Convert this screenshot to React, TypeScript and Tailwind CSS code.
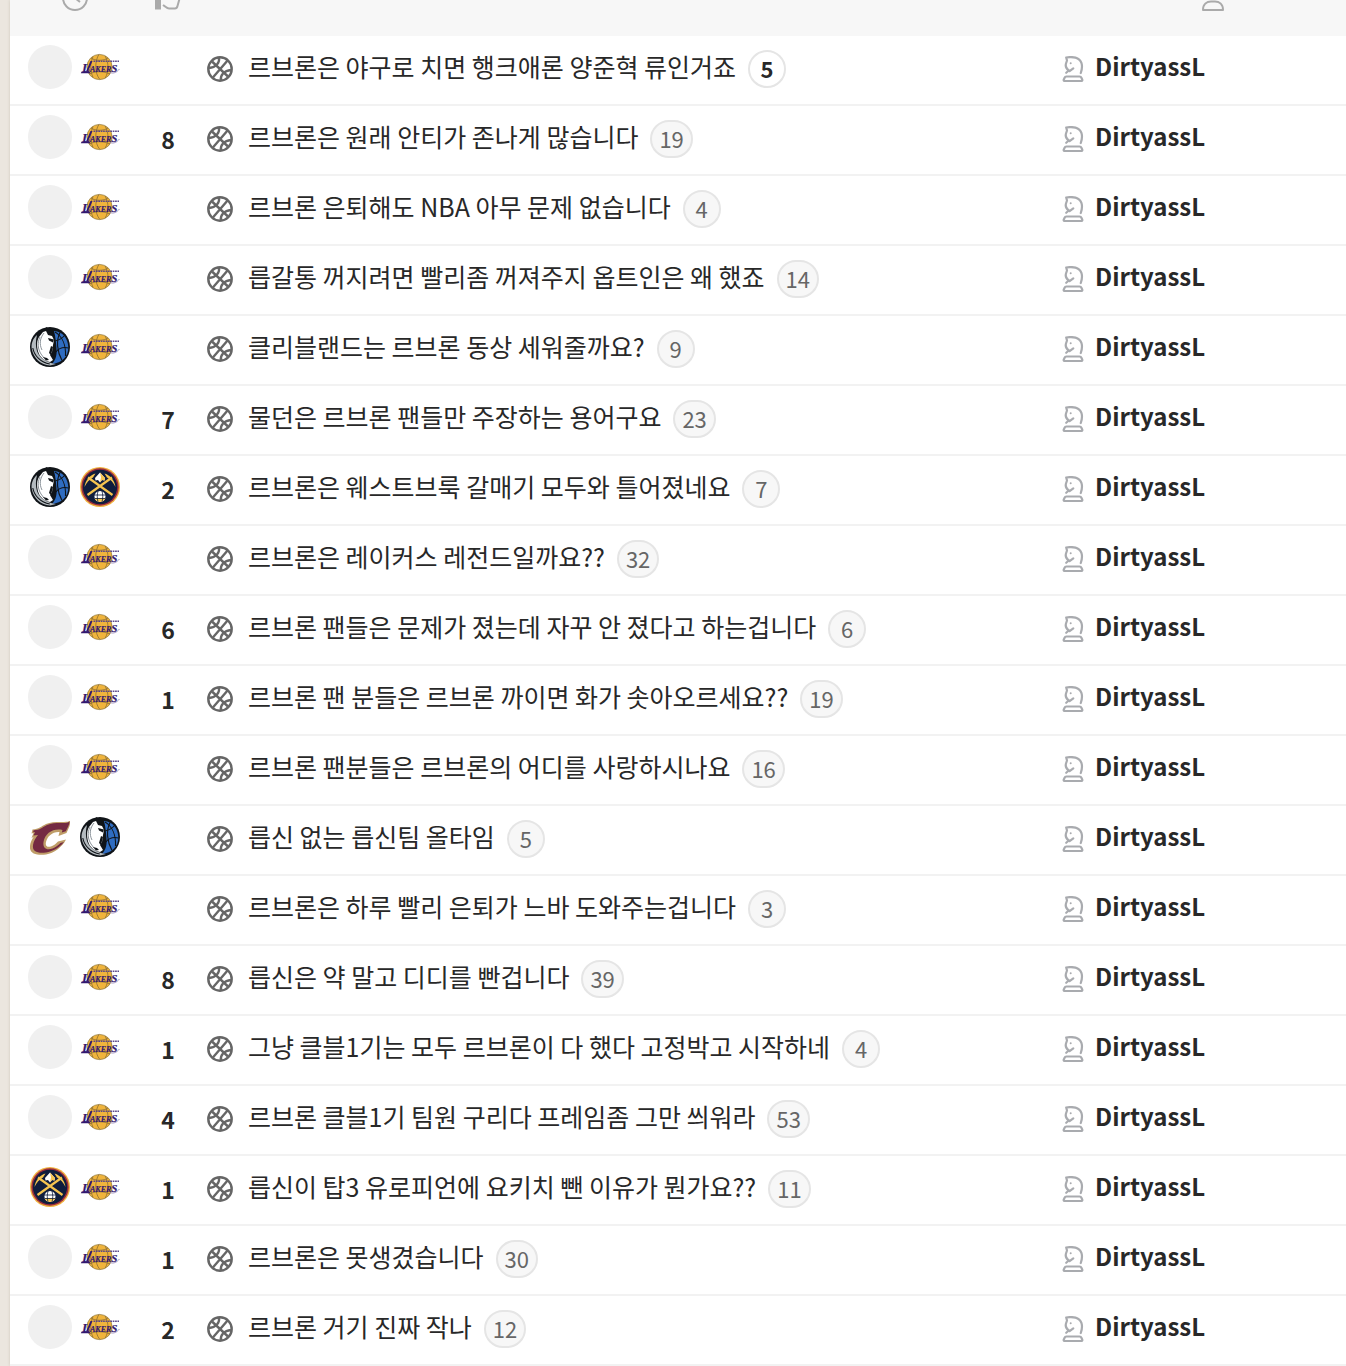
import type { ReactNode } from 'react';

type Team = 'none' | 'lakers' | 'mavs' | 'nuggets' | 'cavs';

interface Post {
  teams: [Team, Team];
  votes?: number;
  title: string;
  comments: number;
  hot?: boolean;
}

const AUTHOR = 'DirtyassL';

const posts: Post[] = [
  { teams: ['none', 'lakers'], title: '르브론은 야구로 치면 행크애론 양준혁 류인거죠', comments: 5, hot: true },
  { teams: ['none', 'lakers'], votes: 8, title: '르브론은 원래 안티가 존나게 많습니다', comments: 19 },
  { teams: ['none', 'lakers'], title: '르브론 은퇴해도 NBA 아무 문제 없습니다', comments: 4 },
  { teams: ['none', 'lakers'], title: '릅갈통 꺼지려면 빨리좀 꺼져주지 옵트인은 왜 했죠', comments: 14 },
  { teams: ['mavs', 'lakers'], title: '클리블랜드는 르브론 동상 세워줄까요?', comments: 9 },
  { teams: ['none', 'lakers'], votes: 7, title: '물던은 르브론 팬들만 주장하는 용어구요', comments: 23 },
  { teams: ['mavs', 'nuggets'], votes: 2, title: '르브론은 웨스트브룩 갈매기 모두와 틀어졌네요', comments: 7 },
  { teams: ['none', 'lakers'], title: '르브론은 레이커스 레전드일까요??', comments: 32 },
  { teams: ['none', 'lakers'], votes: 6, title: '르브론 팬들은 문제가 졌는데 자꾸 안 졌다고 하는겁니다', comments: 6 },
  { teams: ['none', 'lakers'], votes: 1, title: '르브론 팬 분들은 르브론 까이면 화가 솟아오르세요??', comments: 19 },
  { teams: ['none', 'lakers'], title: '르브론 팬분들은 르브론의 어디를 사랑하시나요', comments: 16 },
  { teams: ['cavs', 'mavs'], title: '릅신 없는 릅신팀 올타임', comments: 5 },
  { teams: ['none', 'lakers'], title: '르브론은 하루 빨리 은퇴가 느바 도와주는겁니다', comments: 3 },
  { teams: ['none', 'lakers'], votes: 8, title: '릅신은 약 말고 디디를 빤겁니다', comments: 39 },
  { teams: ['none', 'lakers'], votes: 1, title: '그냥 클블1기는 모두 르브론이 다 했다 고정박고 시작하네', comments: 4 },
  { teams: ['none', 'lakers'], votes: 4, title: '르브론 클블1기 팀원 구리다 프레임좀 그만 씌워라', comments: 53 },
  { teams: ['nuggets', 'lakers'], votes: 1, title: '릅신이 탑3 유로피언에 요키치 뺀 이유가 뭔가요??', comments: 11 },
  { teams: ['none', 'lakers'], votes: 1, title: '르브론은 못생겼습니다', comments: 30 },
  { teams: ['none', 'lakers'], votes: 2, title: '르브론 거기 진짜 작나', comments: 12 },
];

const LakersLogo = () => (
  <svg viewBox="0 0 40 40" className="size-10" aria-label="Lakers">
    <circle cx="19.5" cy="20" r="12.6" fill="#f0b43c" stroke="#8f7a45" strokeWidth="0.7" />
    <g fill="none" stroke="#7b6434" strokeWidth="0.7">
      <path d="M19 7.4C15 13 14 26 20 32.6" />
      <path d="M11 11c4 3 13 3 17 0" />
      <path d="M9 27c6-3 15-3 21 0" />
      <path d="M25 8.800c4 7 4 16 0 22.500M13 9.500c-3 7-3 14 0 21" />
    </g>
    <path d="M13.500 14.200H39" stroke="#5a4889" strokeWidth="1.600" strokeDasharray="1.700 .7" />
    <text x="2" y="25" fontSize="13" fontFamily="Liberation Serif, serif" fontWeight="700" fontStyle="italic" fill="#33186f" stroke="#33186f" strokeWidth="0.2">
      L<tspan fontSize="8">AKER</tspan><tspan fontSize="11">S</tspan>
    </text>
    <path d="M.8 26.300h9.700l-1-1.500H1.500z" fill="#33186f" />
    <path d="M6 24.500l4.500-10.500h2L8 24.500z" fill="#33186f" />
    <path d="M30 25.500c4 1.500 7-.5 9.500-3.500" fill="none" stroke="#8b7cae" strokeWidth="0.8" />
  </svg>
);

const MavsLogo = () => (
  <svg viewBox="0 0 40 40" className="size-10" aria-label="Mavericks">
    <circle cx="20" cy="20" r="20" fill="#101418" />
    <path d="M12 3l5-3 1 2 3 1v4l-9 1z" fill="#101418" />
    <path d="M24 4C32.500 4.500 38.300 11.500 38.300 20.500S32 36 22 37c4-5 5-9 4.500-15-.5-7-1-12-2.500-18z" fill="#2f6cc0" />
    <g fill="none" stroke="#101418" strokeWidth="1.100">
      <path d="M25 14c5-1 8-3.500 10.500-6.500" />
      <path d="M25 5c7 4 11 13 10.500 24" />
      <path d="M30 5.500c-4 8-3 19 2 28" />
      <path d="M26 25c3-4 8-5 12.500-4" />
    </g>
    <path d="M7 8C2.500 12 1 17 1.800 22c1.500 9 9 16 18.200 16.500l6-1.500C17 36 9 31 7 24 5.500 19 5.500 14 7 8z" fill="#b4bbc0" />
    <path d="M2.800 21c1.500 8 8 14.500 17 16" fill="none" stroke="#101418" strokeWidth="1.100" />
    <path d="M16 4l-3 1-4 5c-3 5-2 12 0 17 2 4 6 7 11 8l3-2-3-5 2-3 1-7 1-5-2-4-4-1-1-2z" fill="#fff" />
    <path d="M14 6c-4 5-5 11-2 17M10 10c-3 6-2 12 1 17l3 4" fill="none" stroke="#7e878e" strokeWidth="0.900" />
    <path d="M18 11l6 1.500-1 3-4-2zM21 19l2 1-2 8-2-2zM13 30l4 1 2 2-3 .5z" fill="#101418" />
  </svg>
);

const NuggetsLogo = () => (
  <svg viewBox="0 0 40 40" className="size-10" aria-label="Nuggets">
    <circle cx="20" cy="20" r="20" fill="#f0b13f" />
    <circle cx="20" cy="20" r="18.700" fill="#9c2c3c" />
    <circle cx="20" cy="20" r="17.200" fill="#101d3d" />
    <path d="M7.500 28L32 10.500M32.500 28L8 10.500" stroke="#f5c34f" strokeWidth="2.200" />
    <path d="M4.500 20C5.500 13 9.500 8.500 15.500 6.500l-2.500 4C9.500 12.500 6.500 15.500 4.500 20zM35.500 20c-1-7-5-11.500-11-13.500l2.500 4c3.500 2 6.500 5 8.500 9.500z" fill="#f5c34f" />
    <path d="M20 5.500l5 5.500-.5 2.500-2.500-.5-2 2.500-2-2.500-2.500.5L15 11z" fill="#fff" />
    <path d="M20 5.500l5 5.500-.5 2.500-2.500-.5-2 2.500 1-5z" fill="#f5c34f" />
    <circle cx="20" cy="29.500" r="5.500" fill="#fff" />
    <path d="M14.700 31h10.600c-.7 2.500-2.700 4-5.300 4s-4.600-1.500-5.300-4z" fill="#f5c34f" />
    <path d="M14.500 28h11M15 31.500h10M18 24c-1 4-1 7 0 11M22 24c1 4 1 7 0 11" fill="none" stroke="#101d3d" strokeWidth="0.800" />
  </svg>
);

const CavsLogo = () => (
  <svg viewBox="0 0 40 40" className="size-10" aria-label="Cavaliers">
    <path
      d="M40.500 3.500c0 4-2 8-4 12.500l-8 3 1-4c-7-.5-12 4-13.500 10-1 4.500 1.500 5.500 5 4.500 3-1 5-3 7-5l8-2c-4 8-12 13.500-20 15C7 38.500-1 37 0 29c.3-3 1.500-6 3.500-9l-2 1 2-5-2 .5 1-4C9 12 11 9.500 16 7c6-2.500 14-2 18-2 3 0 5-.5 6.500-1.500z"
      fill="#bf9d68"
    />
    <path
      d="M39.500 4.800c0 3-2 6-3.700 9.500l-4 1.200.7-2.500c-9-2-17.500 3-19 12-1 6.500 3.500 8.500 9 6.500 3-1 5.500-3 8-5.500l3.500-1C29 31 22.500 34.500 16 35.500 8 36.500 2 35 3 28c.5-4 2.500-7 5-10l-4.500.5L5 15l-2 .2.700-2C10 13 12 10.500 17 8c6-2.400 13-2 17-1.900 2.200 0 4-.5 5.500-1.300z"
      fill="#742a42"
    />
  </svg>
);

const logos: Record<Team, ReactNode> = {
  none: <span className="block size-11 shrink-0 rounded-full bg-[#f0f0f0]" />,
  lakers: <LakersLogo />,
  mavs: <MavsLogo />,
  nuggets: <NuggetsLogo />,
  cavs: <CavsLogo />,
};

const BallIcon = () => (
  <svg viewBox="0 0 26 26" className="size-[26px] shrink-0" fill="none" stroke="#666" strokeWidth="2.400" aria-hidden="true">
    <circle cx="13" cy="13" r="11.700" />
    <path d="M21 4L5 22.500M5 5.500L21 20.500" />
    <path d="M12 1.500c1 5-3 10-10 10.500" />
    <path d="M14 24.500c-1-5 3-10 10-10.500" />
  </svg>
);

const KnightIcon = () => (
  <svg viewBox="0 0 22 26" className="h-[26px] w-[22px] shrink-0" fill="none" stroke="#a9abaf" strokeWidth="2.200" strokeLinecap="round" strokeLinejoin="round" aria-hidden="true">
    <path d="M6.500 14.300C4 12.500 3.300 10 4 7.500L5 4.500 4.200 1.500C8 .8 11 1 13.500 1.600 19.500 3.200 21.500 9 18.800 17" />
    <path d="M4.200 16.800l2.600-2.300.8.600 3.700-2.800" />
    <circle cx="8.700" cy="7.300" r="1" fill="#a9abaf" stroke="none" />
    <path d="M4.500 20.500h13c1 0 1.700.5 2 1.500l.7 1.500c.4 1-.1 1.500-1 1.500H2.800c-.9 0-1.400-.5-1-1.500l.7-1.500c.3-1 1-1.500 2-1.500z" />
  </svg>
);

const ClockIcon = () => (
  <svg viewBox="0 0 26 26" className="size-[26px]" fill="none" stroke="#aaa" strokeWidth="2" aria-label="시간">
    <circle cx="13" cy="12" r="12" />
    <path d="M13 4v8l5 4" />
  </svg>
);

const ThumbIcon = () => (
  <svg viewBox="0 0 26 26" className="size-[26px]" fill="none" stroke="#aaa" strokeWidth="2" strokeLinejoin="round" aria-label="추천">
    <path d="M0 11h6v12.500H0z" fill="#aaa" stroke="none" />
    <path d="M8 12l5-3V2c0-1 4-1 4 3v6h8l-2.500 9c-.5 2-1 2.500-2.500 2.500h-6c-2 0-3.500-1.500-6-3.500" />
  </svg>
);

const UserIcon = () => (
  <svg viewBox="0 0 24 26" className="h-[26px] w-6" fill="none" stroke="#aaa" strokeWidth="2" strokeLinejoin="round" aria-label="작성자">
    <circle cx="12" cy="6" r="5" />
    <path d="M2 24c0-6 4-8.500 8-8.500h4c4 0 8 2.500 8 8.500z" />
  </svg>
);

const PostRow = ({ post }: { post: Post }) => {
  const cell = 'h-[70px] border-b-2 border-[#f2f2f2] px-0 pt-0 pb-0.5';

  return (
    <tr>
      <td className={cell}>
        <div className="flex items-center pb-1 pl-5">
          <div className="flex w-[50px] items-center">
            <div className="flex w-10 shrink-0 justify-center">{logos[post.teams[0]]}</div>
          </div>
          {logos[post.teams[1]]}
        </div>
      </td>
      <td className={`${cell} text-center text-[23px] font-bold`}>{post.votes}</td>
      <td className={cell}>
        <div className="flex items-center pl-2">
          <BallIcon />
          <a href="#post" className="ml-[15px] pb-1.5 text-[25px] leading-9 whitespace-nowrap">
            {post.title}
          </a>
          <span
            className={`ml-3 flex h-[38px] min-w-[38px] items-center justify-center rounded-full border-2 border-[#e5e5e5] px-[7px] pb-0.5 text-[22px] ${
              post.hot ? 'bg-white font-bold' : 'bg-[#f7f7f7] text-[#666]'
            }`}
          >
            {post.comments}
          </span>
        </div>
      </td>
      <td className={cell}>
        <a href="#author" className="flex items-center gap-[11px] text-[24px] leading-9 font-bold">
          <KnightIcon />
          <span className="pb-1.5">{AUTHOR}</span>
        </a>
      </td>
    </tr>
  );
};

export default function App() {
  return (
    <div className="bg-[#ebe6df] pl-2.5 font-['Noto_Sans_CJK_KR',sans-serif] text-[#282828]">
      <main className="overflow-hidden bg-white shadow-[0_0_3px_#cfc8bc]">
        <table className="w-full table-fixed border-separate border-spacing-0">
          <colgroup>
            <col className="w-[127px]" />
            <col className="w-[62px]" />
            <col />
            <col className="w-[284px]" />
          </colgroup>
          <thead>
            <tr className="bg-[#f7f7f7]">
              <th className="p-0">
                <div className="flex h-9 items-end overflow-hidden pb-6 pl-[52px]">
                  <ClockIcon />
                </div>
              </th>
              <th className="p-0">
                <div className="flex h-9 items-end justify-center overflow-hidden pb-6">
                  <ThumbIcon />
                </div>
              </th>
              <th className="p-0" />
              <th className="p-0">
                <div className="flex h-9 items-end overflow-hidden pb-6 pl-[139px]">
                  <UserIcon />
                </div>
              </th>
            </tr>
          </thead>
          <tbody>
            {posts.map((post) => (
              <PostRow key={post.title} post={post} />
            ))}
          </tbody>
        </table>
      </main>
    </div>
  );
}
